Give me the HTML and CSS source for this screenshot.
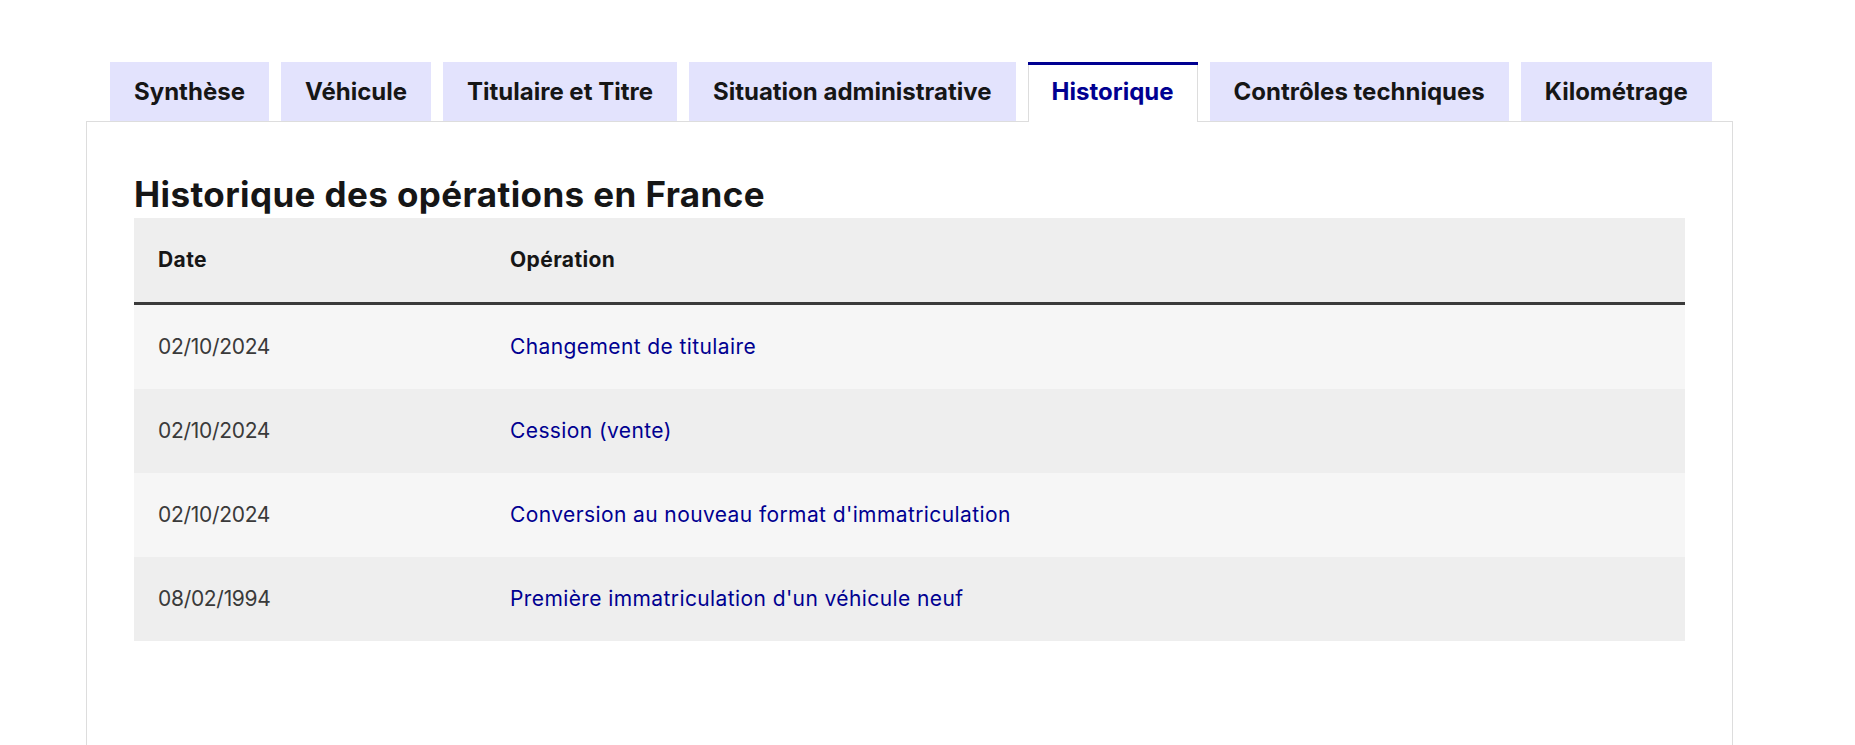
FILE: index.html
```html
<!DOCTYPE html>
<html lang="fr">
<head>
    <meta charset="UTF-8">
    <meta name="viewport" content="width=device-width, initial-scale=1.0">
    <title>Historique du véhicule</title>
    <link rel="stylesheet" href="styles.css">
</head>
<body>

    <div class="tabs">
        <!-- Onglets -->
        <ul class="tab-list">
            <li class="tab">Synthèse</li>
            <li class="tab">Véhicule</li>
            <li class="tab">Titulaire et Titre</li>
            <li class="tab">Situation administrative</li>
            <li class="tab active">Historique</li>
            <li class="tab">Contrôles techniques</li>
            <li class="tab">Kilométrage</li>
        </ul>

        <!-- Panneau Historique -->
        <div class="tab-panel">
            <h3 class="panel-title">Historique des opérations en France</h3>
            <table class="history">
                <thead>
                    <tr>
                        <th class="col-date">Date</th>
                        <th>Opération</th>
                    </tr>
                </thead>
                <tbody>
                    <tr>
                        <td class="date">02/10/2024</td>
                        <td><a href="#">Changement de titulaire</a></td>
                    </tr>
                    <tr>
                        <td class="date">02/10/2024</td>
                        <td><a href="#">Cession (vente)</a></td>
                    </tr>
                    <tr>
                        <td class="date">02/10/2024</td>
                        <td><a href="#">Conversion au nouveau format d'immatriculation</a></td>
                    </tr>
                    <tr>
                        <td class="date">08/02/1994</td>
                        <td><a href="#">Première immatriculation d'un véhicule neuf</a></td>
                    </tr>
                </tbody>
            </table>
        </div>
    </div>

</body>
</html>
```
FILE: styles.css
```css
/* Page */
html, body {
    overflow: hidden;
}
body {
    font-family: Inter, "Noto Sans", sans-serif;
    color: #161616;
    background-color: #fff;
    margin: 0;
    padding: 62px 0 0;
}
.tabs {
    width: 1647px;
    margin-left: 86px;
}

/* Tabs */
.tab-list {
    display: flex;
    align-items: flex-start;
    gap: 12px;
    list-style: none;
    margin: 0;
    padding: 0 0 0 24px;
}
.tab {
    height: 59px;
    line-height: 59px;
    padding: 0 24px;
    background-color: #e3e3fd;
    font-size: 24px;
    font-weight: 700;
    white-space: nowrap;
    cursor: pointer;
}
.tab.active {
    position: relative;
    height: 60px;
    margin-bottom: -1px;
    background-color: #fff;
    color: #000091;
    box-shadow: inset 0 3px 0 0 #000091, inset 1px 0 0 0 #ddd, inset -1px 0 0 0 #ddd;
}

/* Panel */
.tab-panel {
    border: 1px solid #ddd;
    border-bottom: none;
    padding: 48px 47px 110px;
}
.panel-title {
    margin: 0;
    font-size: 35px;
    line-height: 48px;
    letter-spacing: 0.4px;
    font-weight: 700;
}

/* Table */
.history {
    width: 100%;
    border-collapse: separate;
    border-spacing: 0;
    font-size: 21px;
    line-height: 36px;
    letter-spacing: 0.4px;
}
.history th, .history td {
    padding: 24px;
    text-align: left;
}
.history th {
    background-color: #eee;
    font-weight: 700;
    color: #161616;
    border-bottom: 3px solid #3a3a3a;
}
.history .col-date {
    width: 304px;
}
.history td {
    color: #3a3a3a;
}
.history td.date {
    letter-spacing: -0.3px;
}
.history tbody tr:nth-child(odd) {
    background-color: #f6f6f6;
}
.history tbody tr:nth-child(even) {
    background-color: #eee;
}
.history a {
    color: #000091;
    text-decoration: none;
}
```
